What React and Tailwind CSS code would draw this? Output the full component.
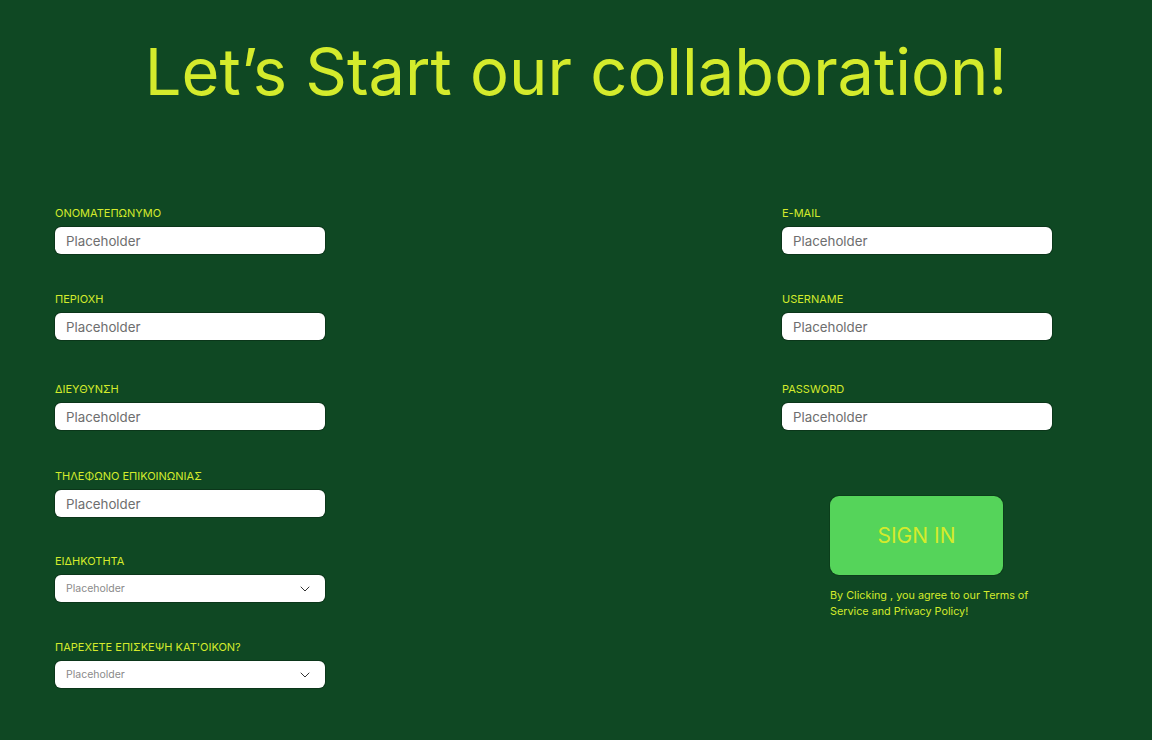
import { ChevronDown } from "lucide-react";

const fontStack = { fontFamily: "Inter, 'Noto Sans', sans-serif" };

function Field({ label, className = "", select = false }) {
  return (
    <div className={className}>
      <label className="block text-[11px] leading-[14px] text-[#d4eb2c]">{label}</label>
      {select ? (
        <div className="mt-[7px] h-[27px] w-[270px] rounded-[6px] bg-white shadow-[0_0_0_1px_rgba(0,0,0,0.25)] flex items-center justify-between pl-[11px] pr-[12px]">
          <span className="text-[10.5px] text-[#8a8a8a]">Placeholder</span>
          <ChevronDown size={16} strokeWidth={1.5} className="text-[#333]" />
        </div>
      ) : (
        <input
          type="text"
          placeholder="Placeholder"
          className="mt-[7px] block h-[27px] w-[270px] rounded-[6px] bg-white px-[11px] text-[13.3px] text-[#333] placeholder:text-[#6e6e6e] shadow-[0_0_0_1px_rgba(0,0,0,0.25)] outline-none"
        />
      )}
    </div>
  );
}

export default function App() {
  return (
    <div style={fontStack} className="w-[1152px] h-[740px] bg-[#0f4823] overflow-hidden">
      <h1 className="pt-[39px] text-center text-[65px] leading-[65px] font-normal text-[#d4eb2c]">
        Let’s Start our collaboration!
      </h1>

      <div className="mt-[102px] flex pl-[55px]">
        <div className="w-[270px] flex flex-col">
          <Field label="ΟΝΟΜΑΤΕΠΩΝΥΜΟ" />
          <Field label="ΠΕΡΙΟΧΗ" className="mt-[38px]" />
          <Field label="ΔΙΕΥΘΥΝΣΗ" className="mt-[42px]" />
          <Field label="ΤΗΛΕΦΩΝΟ ΕΠΙΚΟΙΝΩΝΙΑΣ" className="mt-[39px]" />
          <Field label="ΕΙΔΗΚΟΤΗΤΑ" className="mt-[37px]" select />
          <Field label="ΠΑΡΕΧΕΤΕ ΕΠΙΣΚΕΨΗ ΚΑΤ'ΟΙΚΟΝ?" className="mt-[38px]" select />
        </div>

        <div className="ml-[457px] w-[270px] flex flex-col">
          <Field label="E-MAIL" />
          <Field label="USERNAME" className="mt-[38px]" />
          <Field label="PASSWORD" className="mt-[42px]" />

          <div className="ml-[48px] mt-[66px]">
            <button className="w-[173px] h-[79px] rounded-[9px] bg-[#55d45a] text-[21px] text-[#d4eb2c] shadow-[0_0_0_1px_rgba(10,60,25,0.8)]">
              SIGN IN
            </button>
            <p className="mt-[13px] w-[205px] text-[10.8px] leading-[16px] text-[#d4eb2c]">
              By Clicking , you agree to our Terms of Service and Privacy Policy!
            </p>
          </div>
        </div>
      </div>
    </div>
  );
}
